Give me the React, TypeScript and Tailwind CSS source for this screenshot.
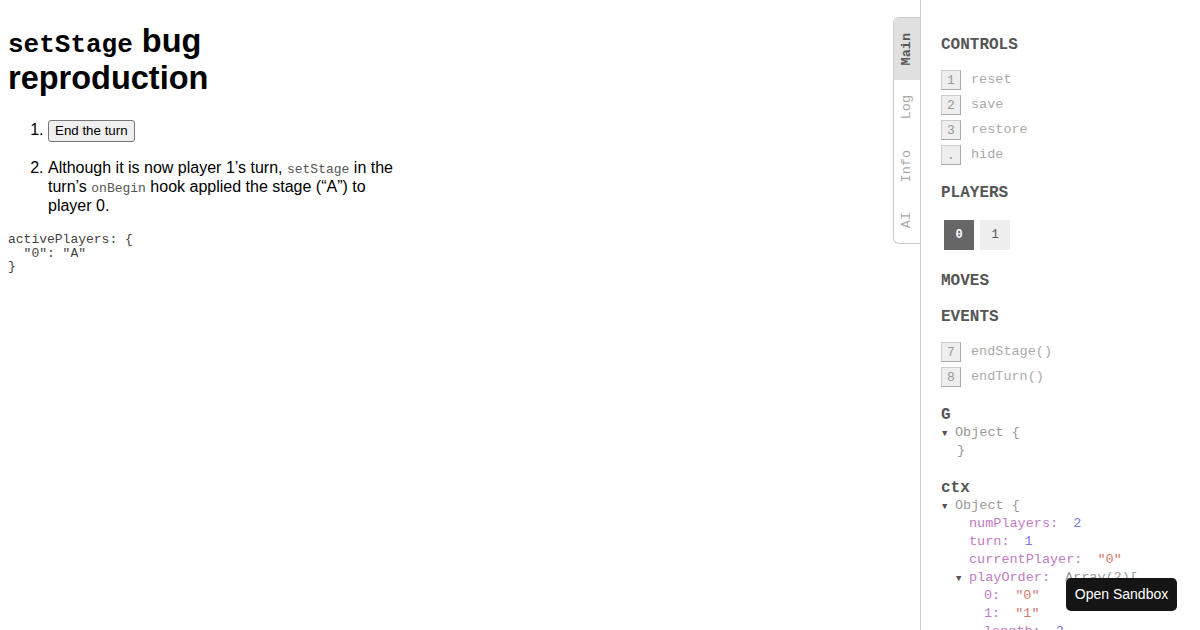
import React from "react";

const MONO = "font-['Liberation_Mono',monospace]";

type Tab = { label: string; active?: boolean };

const TABS: Tab[] = [
  { label: "Main", active: true },
  { label: "Log" },
  { label: "Info" },
  { label: "AI" },
];

function KeyRow({ k, label }: { k: string; label: string }) {
  return (
    <div className="flex h-5 items-center">
      <span className="flex h-5 w-5 items-center justify-center border border-[#ccc] border-r-[#aaa] border-b-[#aaa] bg-[#eee] text-[13px] leading-none text-[#999]">
        {k}
      </span>
      <span className="ml-[10px] text-[13.5px] text-[#aaa]">{label}</span>
    </div>
  );
}

function Heading({ children, className = "" }: { children: React.ReactNode; className?: string }) {
  return (
    <div className={`text-[16px] font-bold leading-[20px] text-[#555] ${className}`}>
      {children}
    </div>
  );
}

// one line of the object inspector
function Prop({
  name,
  value,
  kind,
}: {
  name: string;
  value: string;
  kind: "num" | "str" | "plain";
}) {
  const color =
    kind === "num" ? "text-[#7b78e0]" : kind === "str" ? "text-[#d27a70]" : "text-[#999]";
  return (
    <div className="h-[18px] leading-[18px]">
      <span className="text-[#c27bc4]">{name}:</span>
      <span className={`ml-[15px] ${color}`}>{value}</span>
    </div>
  );
}

export default function App() {
  return (
    <div className="flex h-[630px] w-[1200px] overflow-hidden bg-white font-['Liberation_Sans',Arial,sans-serif] text-black">
      {/* page content */}
      <div className="min-w-0 flex-1 px-2">
        <div className="w-[400px]">
          <h1 className="mt-[23px] mb-[23px] max-w-[380px] text-[32.5px] font-bold leading-[37px]">
            <code className={`${MONO} text-[26px] leading-none`}>setStage</code> bug reproduction
          </h1>
          <ol className="mt-0 list-decimal pl-10 text-[16px] leading-[19px]">
            <li className="mb-4">
              <button className="rounded-[3px] border border-[#767676] bg-[#efefef] px-[6px] py-px text-[13.33px] leading-[18px]">
                End the turn
              </button>
            </li>
            <li className="mb-[18px]">
              Although it is now player 1’s turn,{" "}
              <code className={`${MONO} text-[13px] leading-none text-[#555]`}>setStage</code> in
              the turn’s{" "}
              <code className={`${MONO} text-[13px] leading-none text-[#555]`}>onBegin</code> hook
              applied the stage (“A”) to player 0.
            </li>
          </ol>
        </div>
        <pre className={`${MONO} mt-0 text-[13px] leading-[13.5px] text-[#444]`}>
          {"activePlayers: {\n  \"0\": \"A\"\n}"}
        </pre>
      </div>

      {/* debug panel tabs */}
      <div className="mt-[17px] flex w-[27px] flex-col self-start overflow-hidden rounded-l-[6px] border border-r-0 border-[#ccc] bg-white">
        {TABS.map((t) => (
          <div
            key={t.label}
            className={`flex items-center justify-center py-[15px] ${
              t.active ? "bg-[#e0e0e0] font-bold text-[#555]" : "text-[#aaa]"
            }`}
          >
            <span
              className={`${MONO} rotate-180 text-[13.5px] leading-[26px] [writing-mode:vertical-rl]`}
            >
              {t.label}
            </span>
          </div>
        ))}
      </div>

      {/* debug panel */}
      <div className={`${MONO} h-full w-[280px] shrink-0 border-l border-[#ccc] bg-white pl-5 pt-[35px] whitespace-nowrap`}>
        <Heading>CONTROLS</Heading>
        <div className="mt-[15px] flex flex-col gap-[5px]">
          <KeyRow k="1" label="reset" />
          <KeyRow k="2" label="save" />
          <KeyRow k="3" label="restore" />
          <KeyRow k="." label="hide" />
        </div>

        <Heading className="mt-[18px]">PLAYERS</Heading>
        <div className="mt-[17px] flex gap-[6px] pl-[3px]">
          <span className="flex h-[30px] w-[30px] items-center justify-center bg-[#666] text-[12px] font-bold text-white">
            0
          </span>
          <span className="flex h-[30px] w-[30px] items-center justify-center bg-[#eee] text-[12px] text-[#555]">
            1
          </span>
        </div>

        <Heading className="mt-[21px]">MOVES</Heading>
        <Heading className="mt-[16px]">EVENTS</Heading>
        <div className="mt-[15px] flex flex-col gap-[5px]">
          <KeyRow k="7" label="endStage()" />
          <KeyRow k="8" label="endTurn()" />
        </div>

        <div className="mt-[19px] text-[16px] font-bold leading-[18px] text-[#555]">G</div>
        <div className="text-[13.5px] text-[#999]">
          <div className="h-[18px] leading-[18px]">
            <span className="inline-block w-[14px] pl-px text-[9px] text-[#555]">▼</span>Object {"{"}
          </div>
          <div className="h-[18px] pl-[16px] leading-[18px]">{"}"}</div>
        </div>

        <div className="mt-[19px] text-[16px] font-bold leading-[18px] text-[#555]">ctx</div>
        <div className="text-[13.5px] text-[#999]">
          <div className="h-[18px] leading-[18px]">
            <span className="inline-block w-[14px] pl-px text-[9px] text-[#555]">▼</span>Object {"{"}
          </div>
          <div className="pl-[28px]">
            <Prop name="numPlayers" value="2" kind="num" />
            <Prop name="turn" value="1" kind="num" />
            <Prop name="currentPlayer" value={'"0"'} kind="str" />
            <div className="-ml-[13px] h-[18px] leading-[18px]">
              <span className="inline-block w-[13px] text-[9px] text-[#555]">▼</span>
              <span className="text-[#c27bc4]">playOrder:</span>
              <span className="ml-[15px] text-[#999]">Array(2)[</span>
            </div>
            <div className="pl-[15px]">
              <Prop name="0" value={'"0"'} kind="str" />
              <Prop name="1" value={'"1"'} kind="str" />
              <Prop name="length" value="2" kind="num" />
            </div>
          </div>
        </div>
      </div>

      <button className="fixed right-[23px] bottom-[19px] h-[33px] w-[111px] rounded-[5px] bg-[#151515] text-[14px] text-white font-['Liberation_Sans',Arial,sans-serif]">
        Open Sandbox
      </button>
    </div>
  );
}
